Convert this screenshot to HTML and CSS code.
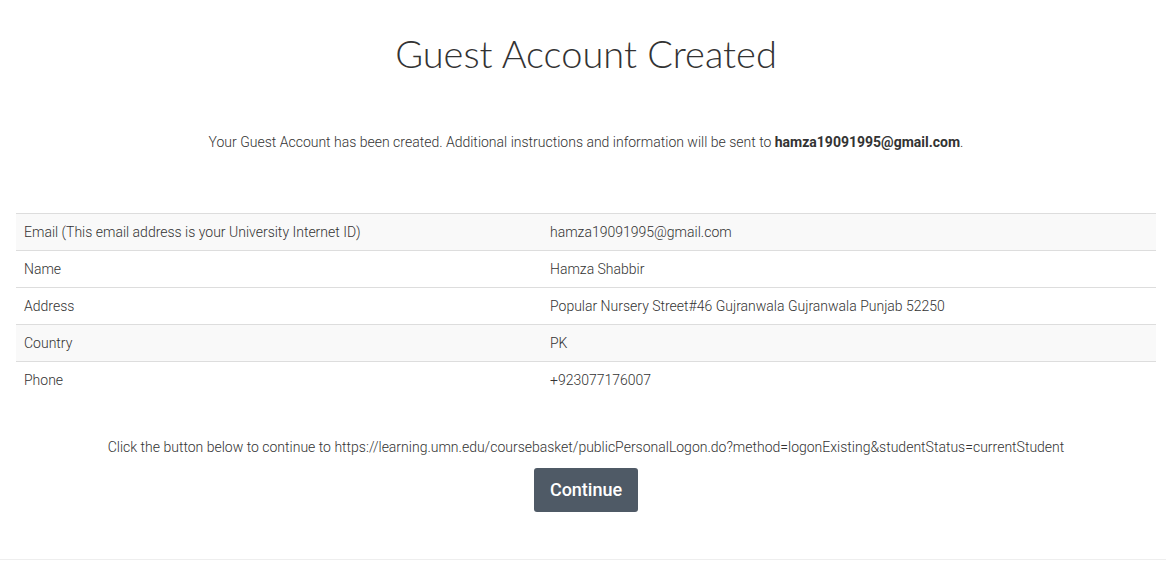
FILE: index.html
```html
<!DOCTYPE html>
<html lang="en">
<head>
<meta charset="utf-8">
<title>Guest Account Created</title>
<link rel="stylesheet" href="styles.css">
</head>
<body>
<div class="container">
  <h1 class="title">Guest Account Created</h1>
  <p class="intro">Your Guest Account has been created. Additional instructions and information will be sent to <strong>hamza19091995@gmail.com</strong>.</p>
  <table class="info">
    <tbody>
      <tr class="striped"><td class="label">Email (This email address is your University Internet ID)</td><td>hamza19091995@gmail.com</td></tr>
      <tr><td class="label">Name</td><td>Hamza Shabbir</td></tr>
      <tr><td class="label">Address</td><td>Popular Nursery Street#46 Gujranwala Gujranwala Punjab 52250</td></tr>
      <tr class="striped"><td class="label">Country</td><td>PK</td></tr>
      <tr><td class="label">Phone</td><td>+923077176007</td></tr>
    </tbody>
  </table>
  <p class="continue-text">Click the button below to continue to https://learning.umn.edu/coursebasket/publicPersonalLogon.do?method=logonExisting&amp;studentStatus=currentStudent</p>
  <div class="actions"><button class="btn" type="button">Continue</button></div>
</div>
<hr class="rule">
</body>
</html>
```
FILE: styles.css
```css
html, body {
  margin: 0;
  padding: 0;
  background: #fff;
}
body {
  font-family: Roboto, "Liberation Sans", sans-serif;
  font-weight: 300;
  font-size: 14px;
  line-height: 20px;
  color: #333;
}
.container {
  margin: 0 10px 0 16px;
}
.title {
  font-family: Lato, "Open Sans", sans-serif;
  font-weight: 300;
  font-size: 38px;
  line-height: 44px;
  text-align: center;
  color: #333;
  margin: 31px 0 0;
}
.intro {
  text-align: center;
  margin: 57px 0 0;
}
.intro strong {
  font-weight: 700;
}
.info {
  width: 100%;
  border-collapse: collapse;
  margin-top: 61px;
}
.info td {
  padding: 8px;
  border-top: 1px solid #ddd;
  vertical-align: top;
}
.info td.label {
  width: 510px;
}
.info tr.striped td {
  background: #f9f9f9;
}
.continue-text {
  text-align: center;
  margin: 39px 0 0;
}
.actions {
  display: flex;
  justify-content: center;
  margin-top: 11px;
}
.btn {
  font-family: Roboto, "Liberation Sans", sans-serif;
  font-weight: 500;
  font-size: 18px;
  line-height: 24px;
  color: #fff;
  background: #4f5a66;
  border: 0;
  border-radius: 3px;
  padding: 10px 16px;
  cursor: pointer;
}
.rule {
  border: 0;
  border-top: 1px solid #eee;
  margin: 47px 0 0;
}
```
